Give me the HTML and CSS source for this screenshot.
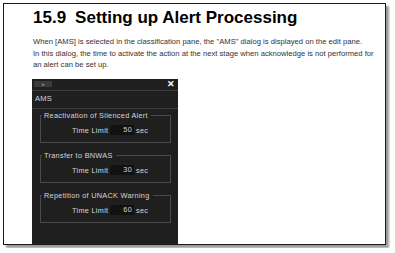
FILE: index.html
```html
<!DOCTYPE html>
<html lang="en">
<head>
    <meta charset="UTF-8">
    <title>Setting up Alert Processing</title>
    <link rel="stylesheet" href="styles.css">
</head>
<body>
    <div class="page">
        <h1 class="section-title"><span class="section-num">15.9</span>Setting up Alert Processing</h1>
        <p class="intro">
            When [AMS] is selected in the classification pane, the "AMS" dialog is displayed on the edit pane.<br>
            In this dialog, the time to activate the action at the next stage when acknowledge is not performed for<br>
            an alert can be set up.
        </p>
        <div class="dialog">
            <div class="dialog-titlebar">
                <span class="pin-btn">&raquo;</span>
                <span class="close-btn">&#x2715;</span>
            </div>
            <div class="dialog-name">AMS</div>
            <div class="dialog-body">
                <fieldset class="group">
                    <legend>Reactivation of Silenced Alert</legend>
                    <div class="field-row">
                        <span class="field-label">Time Limit</span>
                        <span class="field-value">50</span>
                        <span class="field-unit">sec</span>
                    </div>
                </fieldset>
                <fieldset class="group">
                    <legend>Transfer to BNWAS</legend>
                    <div class="field-row">
                        <span class="field-label">Time Limit</span>
                        <span class="field-value">30</span>
                        <span class="field-unit">sec</span>
                    </div>
                </fieldset>
                <fieldset class="group">
                    <legend>Repetition of UNACK Warning</legend>
                    <div class="field-row">
                        <span class="field-label">Time Limit</span>
                        <span class="field-value">60</span>
                        <span class="field-unit">sec</span>
                    </div>
                </fieldset>
            </div>
        </div>
    </div>
</body>
</html>
```

FILE: styles.css
```css
body {
    margin: 0;
    padding: 3px;
    background-color: #ffffff;
    font-family: 'Liberation Sans', Arial, sans-serif;
}
.page {
    width: 383px;
    height: 242px;
    box-sizing: border-box;
    border: 1px solid #1a1a1a;
    background: white;
    box-shadow: 3px 3px 2px #9a9a9a;
    padding: 4px 0 0 29px;
    overflow: hidden;
}
.section-title {
    margin: 0;
    font-size: 17px;
    line-height: 20px;
    font-weight: bold;
    color: #000;
}
.section-num {
    margin-right: 9px;
}
.intro {
    margin: 8px 0 0 0;
    font-size: 7.65px;
    line-height: 11.6px;
    color: #333;
}
.dialog {
    width: 146px;
    margin: 8px 0 0 -1px;
    height: 170px;
    background-color: #1f1f1f;
    color: #d6d6d6;
    font-size: 7.3px;
    letter-spacing: 0.3px;
}
.dialog-titlebar {
    height: 11px;
    display: flex;
    align-items: center;
    justify-content: space-between;
    padding: 0 3px 0 2px;
    border-bottom: 1px solid #3c3c3c;
}
.pin-btn {
    width: 18px;
    height: 6px;
    background-color: #3a3a3a;
    color: #bbb;
    font-size: 5px;
    line-height: 6px;
    text-align: center;
}
.close-btn {
    color: #ffffff;
    font-weight: bold;
    font-size: 9px;
    line-height: 10px;
}
.dialog-name {
    height: 17px;
    line-height: 15px;
    padding-left: 3px;
    font-size: 7.5px;
    border-bottom: 1px solid #3c3c3c;
}
.dialog-body {
    padding: 2px 7px 0 8px;
}
.group {
    margin: 0 0 8px 0;
    padding: 5px 0 6px 0;
    border: 1px solid #4a4a4a;
}
.group legend {
    padding: 0 3px 0 2px;
    margin-left: 1px;
    line-height: 9px;
}
.field-row {
    display: flex;
    align-items: center;
    height: 11px;
    padding-left: 31px;
}
.field-label {
    width: 38px;
}
.field-value {
    width: 24px;
    height: 10px;
    line-height: 10px;
    background-color: #121212;
    text-align: right;
    padding-right: 2px;
    box-sizing: border-box;
}
.field-unit {
    margin-left: 2px;
}
```
